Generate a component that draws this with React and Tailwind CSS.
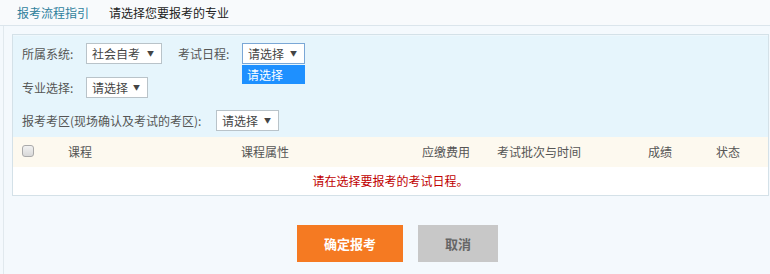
import React from "react";

function Sel({ w, text, focus }) {
  return (
    <div
      className={`h-[21px] ${w} bg-white border ${focus ? "border-[#7aa7d6]" : "border-[#b9c3c9]"} flex items-center justify-between pl-[5px] pr-[7px] text-[#444] leading-none`}
    >
      <span>{text}</span>
      <span className="text-[7px] text-[#444]">▼</span>
    </div>
  );
}

export default function App() {
  return (
    <div className="w-[770px] h-[274px] overflow-hidden bg-[#f4f9fd] font-['Microsoft_YaHei','Noto_Sans_CJK_SC',sans-serif] text-[12px] text-[#555]">
      <div className="h-[26px] bg-[#f8fafc] border-b border-[#dbe5ec] flex items-center pl-[17px] gap-[20px] leading-none">
        <span className="text-[#2f7f9c]">报考流程指引</span>
        <span className="text-[#222]">请选择您要报考的专业</span>
      </div>
      <div className="ml-[3px] border-l border-[#e1e9ee] pl-[8px] pr-[1px] pt-[8px] h-[248px]">
        <div className="border border-[#d4e1e8]">
          <div className="bg-[#e6f5fc] h-[102px] pl-[9px] pt-[7px] border-t border-[#eef7fc]">
            <div className="flex items-center h-[21px]">
              <span className="w-[64px]">所属系统:</span>
              <Sel w="w-[76px]" text="社会自考" />
              <span className="w-[64px] ml-[16px]">考试日程:</span>
              <div className="relative">
                <Sel w="w-[63px]" text="请选择" focus />
                <div className="absolute left-0 top-[22px] w-[63px] h-[19px] bg-[#1e90ff] text-white flex items-center pl-[5px] leading-none">
                  请选择
                </div>
              </div>
            </div>
            <div className="flex items-center h-[21px] mt-[13px]">
              <span className="w-[64px]">专业选择:</span>
              <Sel w="w-[62px]" text="请选择" />
            </div>
            <div className="flex items-center h-[21px] mt-[12px]">
              <span className="w-[194px]">报考考区(现场确认及考试的考区):</span>
              <Sel w="w-[63px]" text="请选择" />
            </div>
          </div>
          <div className="h-[30px] bg-[#fdf9ef] flex items-center text-[#555] leading-none">
            <div className="w-[55px] pl-[9px] flex items-center">
              <span className="w-[12px] h-[12px] rounded-[3px] border border-[#aaa] bg-gradient-to-b from-[#f2f2f2] to-[#d9d9d9] -mt-[2px]" />
            </div>
            <span className="w-[173px]">课程</span>
            <span className="w-[181px]">课程属性</span>
            <span className="w-[75px]">应缴费用</span>
            <span className="w-[151px]">考试批次与时间</span>
            <span className="w-[68px]">成绩</span>
            <span>状态</span>
          </div>
          <div className="h-[28px] bg-white flex items-center justify-center text-[#c00000] leading-none">
            请在选择要报考的考试日程。
          </div>
        </div>
        <div className="flex pl-[285px] mt-[29px] gap-[15px]">
          <div className="w-[106px] h-[37px] bg-[#f57a22] text-white font-bold text-[13px] flex items-center justify-center">
            确定报考
          </div>
          <div className="w-[80px] h-[37px] bg-[#c8c8c8] text-[#666] font-bold text-[13px] flex items-center justify-center">
            取消
          </div>
        </div>
      </div>
    </div>
  );
}
